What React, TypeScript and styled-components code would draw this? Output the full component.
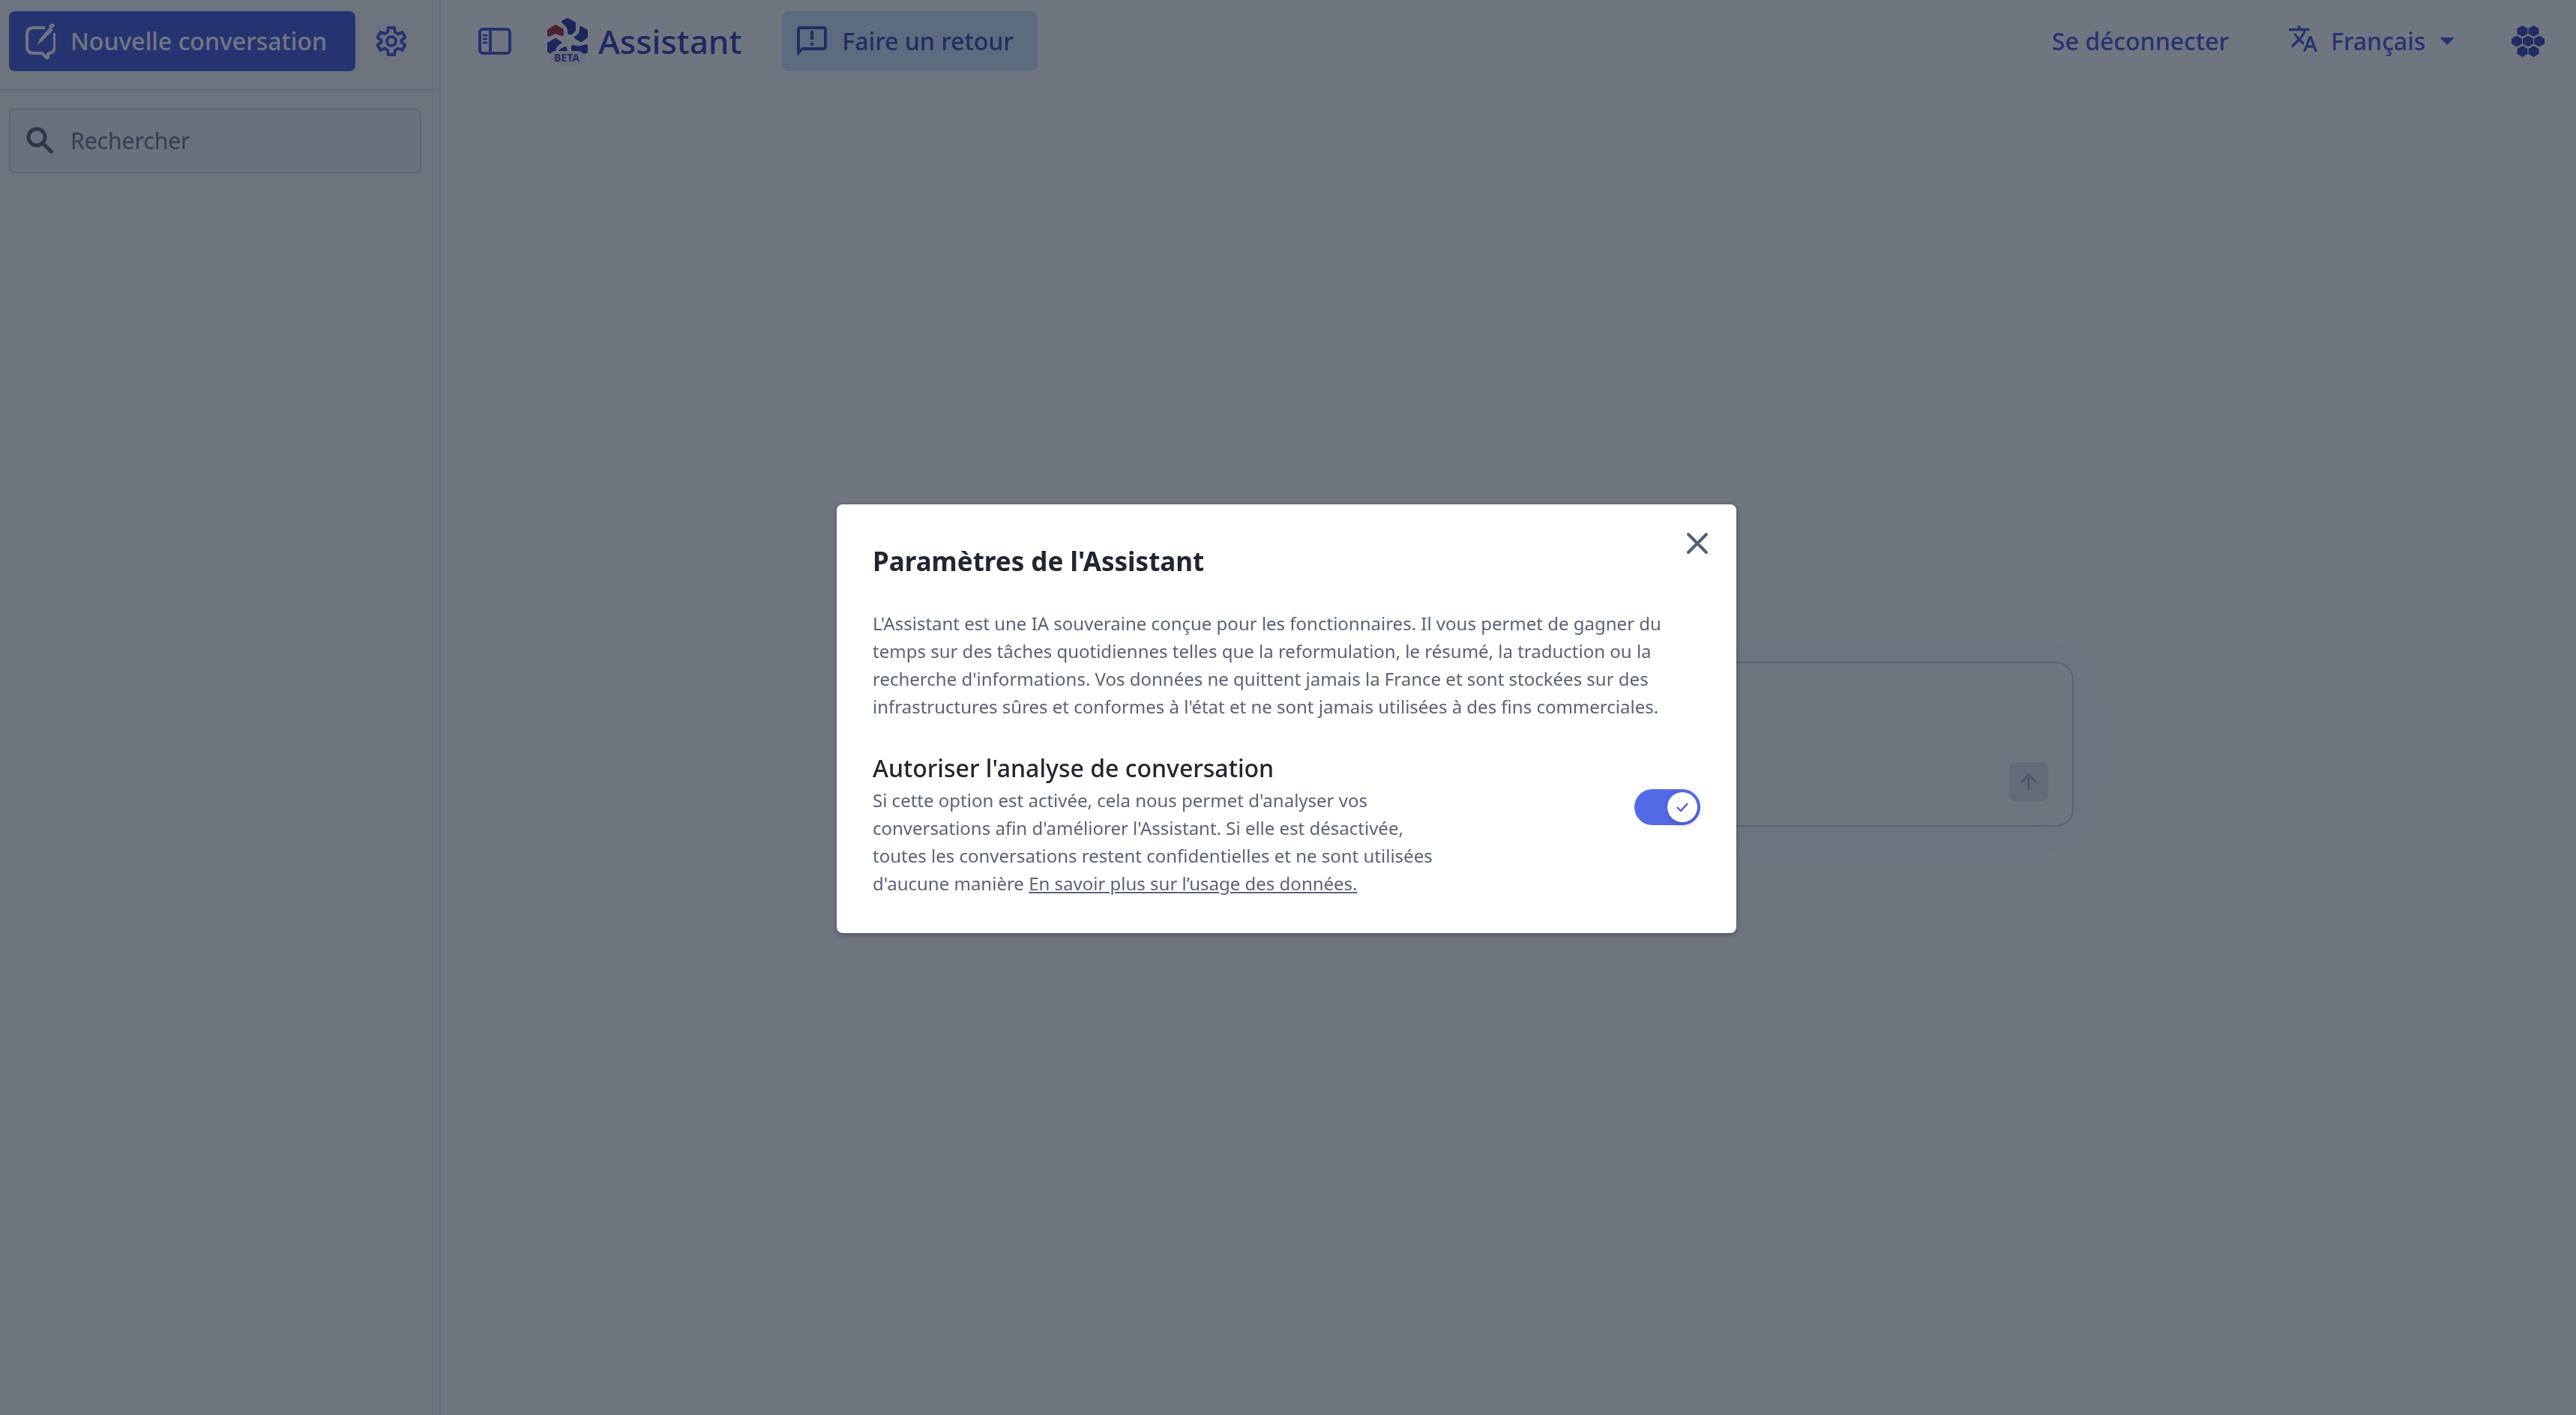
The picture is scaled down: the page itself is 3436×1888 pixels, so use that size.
import React, { useState } from 'react';
import styled, { createGlobalStyle } from 'styled-components';

const FONT = `"Noto Sans", "Open Sans", "Liberation Sans", sans-serif`;

const Global = createGlobalStyle`
  *, *::before, *::after { box-sizing: border-box; }
  body { margin: 0; font-family: ${FONT}; background: #ffffff; color: #222631; }
  button, input, select { font: inherit; color: inherit; }
  h1, h2, h3, p { margin: 0; }
`;

const Layout = styled.div`
  display: grid;
  grid-template-columns: 588px 1fr;
  min-height: 100vh;
`;

const Sidebar = styled.aside`
  display: flex;
  flex-direction: column;
  background: #f7f8f8;
  border-right: 2px solid #dfe0ea;
`;

const SidebarTop = styled.div`
  display: flex;
  align-items: center;
  gap: 24px;
  height: 121px;
  padding: 15px 12px 24px;
  border-bottom: 2px solid #dfe0ea;
`;

const Button = styled.button<{ $tone: 'brand' | 'info' }>`
  display: flex;
  align-items: center;
  gap: 20px;
  height: 80px;
  padding: 0 ${p => (p.$tone === 'brand' ? 38 : 32)}px 0 20px;
  border: 0;
  border-radius: 8px;
  font-size: 32px;
  line-height: 40px;
  white-space: nowrap;
  background: ${p => (p.$tone === 'brand' ? '#4858da' : '#cde4fb')};
  color: ${p => (p.$tone === 'brand' ? '#ffffff' : '#3452b4')};
  font-weight: 500;
`;

const IconButton = styled.button`
  display: flex;
  align-items: center;
  justify-content: center;
  padding: 4px;
  border: 0;
  background: none;
  color: #4858da;
`;

const Search = styled.label`
  display: flex;
  align-items: center;
  gap: 20px;
  height: 86px;
  margin: 24px 24px 0 12px;
  padding: 0 20px;
  border: 2px solid #d8dde4;
  border-radius: 8px;
  background: #f0eff4;
  color: #56657c;
`;

const SearchInput = styled.input`
  flex: 1;
  min-width: 0;
  padding: 0;
  border: 0;
  outline: 0;
  background: none;
  font-size: 30px;
  line-height: 40px;
  &::placeholder { color: #6b7384; opacity: 1; }
`;

const Main = styled.main`
  display: flex;
  flex-direction: column;
`;

const Header = styled.header`
  display: flex;
  align-items: center;
  justify-content: space-between;
  height: 110px;
  padding: 0 38px 0 46px;
`;

const HeaderGroup = styled.div<{ $gap: number }>`
  display: flex;
  align-items: center;
  gap: ${p => p.$gap}px;
`;

const Brand = styled.a`
  display: flex;
  align-items: center;
  gap: 14px;
  margin: 0 10px 0 0;
  color: #323eb2;
  text-decoration: none;
  font-size: 44px;
  line-height: 56px;
  font-weight: 500;
`;

const BrandMark = styled.span`
  position: relative;
  display: flex;
  height: 62px;
`;

const Beta = styled.span`
  position: absolute;
  left: 2px;
  bottom: 0;
  width: 48px;
  height: 18px;
  border-radius: 9px;
  background: #f0eff4;
  color: #3c4aa8;
  font-size: 14px;
  line-height: 18px;
  font-weight: 700;
  text-align: center;
`;

const HeaderLink = styled.a`
  margin-right: 8px;
  color: #4858da;
  font-size: 32px;
  line-height: 40px;
  font-weight: 500;
  text-decoration: none;
`;

const Language = styled.label`
  display: flex;
  align-items: center;
  gap: 18px;
  color: #4858da;
`;

const LanguageSelect = styled.select`
  appearance: none;
  padding: 0;
  border: 0;
  background: none;
  color: inherit;
  font-size: 32px;
  line-height: 40px;
  font-weight: 500;
`;

const Conversation = styled.section`
  display: flex;
  flex: 1;
  align-items: center;
  justify-content: center;
  padding: 0 48px 12px;
`;

const Composer = styled.form`
  display: flex;
  align-items: flex-end;
  gap: 24px;
  width: 100%;
  max-width: 1508px;
  height: 220px;
  padding: 32px;
  border: 2px solid #c8cadb;
  border-radius: 24px;
  background: #ffffff;
  box-shadow: 0 4px 60px rgba(40, 60, 110, 0.07);
`;

const Prompt = styled.textarea`
  flex: 1;
  align-self: stretch;
  padding: 0;
  border: 0;
  outline: 0;
  resize: none;
  background: none;
  font: inherit;
  font-size: 30px;
`;

const Send = styled.button`
  display: flex;
  align-items: center;
  justify-content: center;
  width: 52px;
  height: 52px;
  padding: 0;
  border: 0;
  border-radius: 8px;
  background: #e2e2ea;
  color: #a5b0c0;
`;

const Backdrop = styled.div`
  position: fixed;
  inset: 0;
  display: flex;
  align-items: center;
  justify-content: center;
  padding: 30px 4px 0 0;
  background: rgba(16, 26, 44, 0.6);
`;

const Dialog = styled.div`
  position: relative;
  display: flex;
  flex-direction: column;
  width: 1200px;
  max-width: 100%;
  padding: 48px;
  border-radius: 8px;
  background: #ffffff;
  box-shadow: 0 2px 6px rgba(14, 26, 43, 0.4);
`;

const Close = styled.button`
  position: absolute;
  top: 28px;
  right: 28px;
  display: flex;
  padding: 0;
  border: 0;
  background: none;
  color: #545d75;
`;

const Title = styled.h2`
  font-size: 35px;
  line-height: 56px;
  font-weight: 700;
  color: #222631;
`;

const Text = styled.p`
  font-size: 24px;
  line-height: 37px;
  font-weight: 450;
  color: #5a6279;
`;

const Intro = styled(Text)`
  margin-top: 36px;
`;

const Setting = styled.div`
  display: flex;
  align-items: flex-start;
  justify-content: space-between;
  margin-top: 40px;
`;

const SettingCopy = styled.div`
  width: 780px;
`;

const SettingTitle = styled.label`
  display: block;
  font-size: 32px;
  line-height: 48px;
  font-weight: 500;
  color: #222631;
`;

const TextLink = styled.a`
  color: inherit;
  text-decoration: underline;
`;

const Switch = styled.span`
  position: relative;
  display: flex;
  align-items: center;
  width: 88px;
  height: 48px;
  margin-top: 52px;
`;

const SwitchInput = styled.input`
  appearance: none;
  width: 100%;
  height: 100%;
  margin: 0;
  border-radius: 24px;
  background: #b6bccb;
  &:checked { background: #526ae6; }
`;

const Knob = styled.span<{ $on: boolean }>`
  position: absolute;
  top: 4px;
  left: ${p => (p.$on ? '44px' : '4px')};
  display: flex;
  align-items: center;
  justify-content: center;
  width: 40px;
  height: 40px;
  border-radius: 50%;
  background: #ffffff;
  box-shadow: 0 4px 8px rgba(20, 30, 90, 0.2);
  color: #3e50d8;
  pointer-events: none;
`;

const NewChatIcon = () => (
  <svg width="42" height="50" viewBox="0 0 42 50" fill="none" stroke="currentColor" strokeWidth="4" strokeLinejoin="round" aria-hidden="true">
    <path d="M28 7H13Q4 7 4 16v16q0 9 9 9h10q2 0 3 2l4 4q2 1 2-1v-3q0-2 2-2 7-1 7-9V14" />
    <path d="M36 5l2-1" strokeWidth="5" strokeLinecap="round" />
    <path d="M18 30l3-8L35 6l4 4L25 24z" fill="currentColor" stroke="none" />
  </svg>
);

const GearIcon = () => (
  <svg width="40" height="40" viewBox="0 0 40 40" fill="none" stroke="currentColor" strokeWidth="4" aria-hidden="true">
    <path d="M16 2h8l1 6 4 2.500 5.500-2.500 4 7-5 3.500v3l5 3.500-4 7-5.500-2.500L25 32l-1 6h-8l-1-6-4-2.500L5.500 32l-4-7 5-3.500v-3l-5-3.500 4-7L11 10l4-2z" />
    <circle cx="20" cy="20" r="6" />
  </svg>
);

const SearchIcon = () => (
  <svg width="40" height="40" viewBox="0 0 40 40" fill="none" stroke="currentColor" strokeWidth="5" aria-hidden="true">
    <circle cx="15" cy="15" r="11" />
    <path d="M23 23L36 36" />
  </svg>
);

const PanelIcon = () => (
  <svg width="44" height="36" viewBox="0 0 44 36" fill="none" stroke="currentColor" strokeWidth="4" aria-hidden="true">
    <rect x="2" y="2" width="40" height="32" rx="4" />
    <path d="M16 2v32" />
    <path d="M7 10h4M7 15h4M7 20h4" strokeWidth="3" strokeLinecap="round" />
  </svg>
);

const LogoIcon = () => (
  <svg width="54" height="50" viewBox="0 0 54 50" strokeWidth="4" strokeLinejoin="round" aria-hidden="true">
    <path d="M2 17l9-6 9 5v6l-9-3-9 4z" fill="#9d3038" stroke="#9d3038" />
    <g fill="#2c39a8" stroke="#2c39a8">
      <path d="M21 5l6-3 9 5v9l-4 4h-3q1-9-8-15z" />
      <path d="M45 13l7 4v8l-7 5-7-4q8-4 7-13z" />
      <path d="M2 34l9-5 6 4q-7 3-8 11l-4 2-3-2z" />
      <path d="M34 38q9 3 18-1v8l-4 1-6-3h-8z" />
      <path d="M17 44l7-4 1 4z" />
    </g>
  </svg>
);

const FeedbackIcon = () => (
  <svg width="40" height="40" viewBox="2 2 20 20" fill="currentColor" aria-hidden="true">
    <path d="M20 2H4c-1.100 0-2 .9-2 2v18l4-4h14c1.100 0 2-.9 2-2V4c0-1.100-.9-2-2-2zm0 14H5.200L4 17.200V4h16v12zM11 5h2v6h-2zM11 13h2v2h-2z" />
  </svg>
);

const TranslateIcon = () => (
  <svg width="38" height="42" viewBox="1 2 22 24" fill="currentColor" aria-hidden="true">
    <path d="M12.870 15.070l-2.540-2.510.03-.03c1.740-1.940 2.980-4.170 3.710-6.530H17V4h-7V2H8v2H1v1.990h11.170C11.500 7.920 10.440 9.750 9 11.350 8.070 10.320 7.300 9.190 6.690 8h-2c.73 1.630 1.730 3.170 2.980 4.560l-5.090 5.020L4 19l5-5 3.110 3.110.76-2.040zM18.500 10h-2L12 22h2l1.120-3h4.750L21 22h2l-4.500-12zm-2.620 7l1.620-4.330L19.120 17h-3.240z" />
  </svg>
);

const CaretIcon = () => (
  <svg width="20" height="10" viewBox="0 0 20 10" fill="currentColor" aria-hidden="true">
    <path d="M0 0h20L10 10z" />
  </svg>
);

const HEX_CELLS = [
  [14.5, 7.5], [29.5, 7.5],
  [7, 21], [22, 21], [37, 21],
  [14.5, 34.5], [29.5, 34.5],
];

const AppsIcon = () => (
  <svg width="44" height="42" viewBox="0 0 44 42" fill="#3a46b8" aria-hidden="true">
    {HEX_CELLS.map(([x, y]) => (
      <path key={`${x}-${y}`} d={`M${x} ${y - 7.500}l7 4v7l-7 4l-7-4v-7z`} />
    ))}
  </svg>
);

const SendIcon = () => (
  <svg width="22" height="22" viewBox="0 0 22 22" fill="none" stroke="currentColor" strokeWidth="3" aria-hidden="true">
    <path d="M1 12L11 2l10 10M11 2v20" />
  </svg>
);

const CloseIcon = () => (
  <svg width="48" height="48" viewBox="0 0 48 48" fill="none" stroke="currentColor" strokeWidth="4" strokeLinecap="round" aria-hidden="true">
    <path d="M12 12l24 24M36 12L12 36" />
  </svg>
);

const CheckIcon = () => (
  <svg width="16" height="12" viewBox="0 0 16 12" fill="none" stroke="currentColor" strokeWidth="2" aria-hidden="true">
    <path d="M1 6l5 5L15 1" />
  </svg>
);

export default function App() {
  const [analysis, setAnalysis] = useState(true);

  return (
    <>
      <Global />
      <Layout>
        <Sidebar>
          <SidebarTop>
            <Button $tone="brand" type="button">
              <NewChatIcon />
              Nouvelle conversation
            </Button>
            <IconButton type="button" aria-label="Paramètres">
              <GearIcon />
            </IconButton>
          </SidebarTop>
          <Search>
            <SearchIcon />
            <SearchInput type="search" placeholder="Rechercher" aria-label="Rechercher" />
          </Search>
        </Sidebar>
        <Main>
          <Header>
            <HeaderGroup $gap={44}>
              <IconButton type="button" aria-label="Panneau latéral">
                <PanelIcon />
              </IconButton>
              <Brand href="#">
                <BrandMark>
                  <LogoIcon />
                  <Beta>BETA</Beta>
                </BrandMark>
                Assistant
              </Brand>
              <Button $tone="info" type="button">
                <FeedbackIcon />
                Faire un retour
              </Button>
            </HeaderGroup>
            <HeaderGroup $gap={72}>
              <HeaderLink href="#">Se déconnecter</HeaderLink>
              <Language>
                <TranslateIcon />
                <LanguageSelect aria-label="Langue" defaultValue="fr">
                  <option value="fr">Français</option>
                </LanguageSelect>
                <CaretIcon />
              </Language>
              <IconButton type="button" aria-label="Services">
                <AppsIcon />
              </IconButton>
            </HeaderGroup>
          </Header>
          <Conversation>
            <Composer>
              <Prompt aria-label="Message" />
              <Send type="button" aria-label="Envoyer">
                <SendIcon />
              </Send>
            </Composer>
          </Conversation>
        </Main>
      </Layout>
      <Backdrop>
        <Dialog role="dialog" aria-modal="true" aria-labelledby="settings-title">
          <Close type="button" aria-label="Fermer">
            <CloseIcon />
          </Close>
          <Title id="settings-title">Paramètres de l'Assistant</Title>
          <Intro>
            L'Assistant est une IA souveraine conçue pour les fonctionnaires. Il vous permet de gagner du
            temps sur des tâches quotidiennes telles que la reformulation, le résumé, la traduction ou la
            recherche d'informations. Vos données ne quittent jamais la France et sont stockées sur des
            infrastructures sûres et conformes à l'état et ne sont jamais utilisées à des fins commerciales.
          </Intro>
          <Setting>
            <SettingCopy>
              <SettingTitle htmlFor="analysis">Autoriser l'analyse de conversation</SettingTitle>
              <Text>
                Si cette option est activée, cela nous permet d'analyser vos conversations afin d'améliorer
                l'Assistant. Si elle est désactivée, toutes les conversations restent confidentielles et ne
                sont utilisées d'aucune manière{' '}
                <TextLink href="#">En savoir plus sur l’usage des données.</TextLink>
              </Text>
            </SettingCopy>
            <Switch>
              <SwitchInput
                id="analysis"
                type="checkbox"
                role="switch"
                checked={analysis}
                onChange={e => setAnalysis(e.target.checked)}
              />
              <Knob $on={analysis}>{analysis && <CheckIcon />}</Knob>
            </Switch>
          </Setting>
        </Dialog>
      </Backdrop>
    </>
  );
}
